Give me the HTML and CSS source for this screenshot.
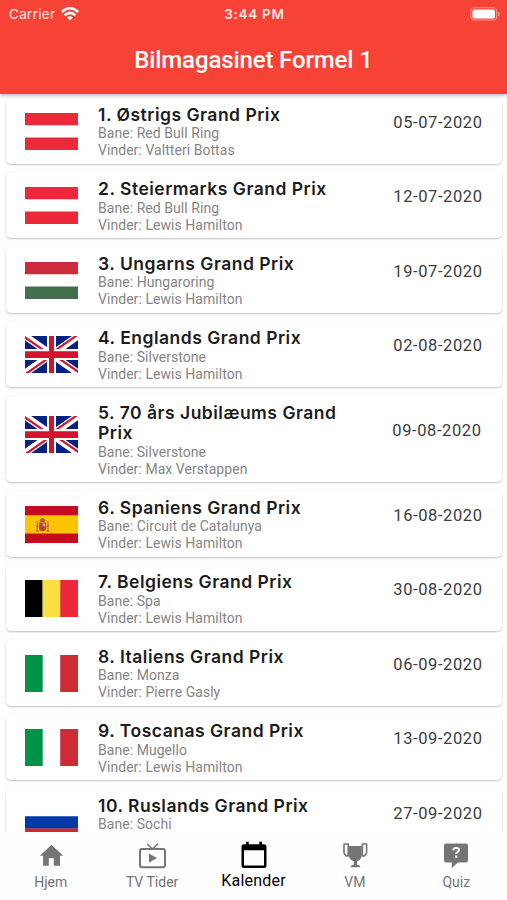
FILE: index.html
```html
<!DOCTYPE html>
<html lang="da">

<head>
    <meta charset="UTF-8">
    <meta name="viewport" content="width=device-width, initial-scale=1.0">
    <title>Bilmagasinet Formel 1</title>
    <link rel="stylesheet" href="styles.css">
</head>

<body>
    <svg class="defs" aria-hidden="true">
        <symbol id="flag-at" viewBox="0 0 53 37" preserveAspectRatio="none">
            <path fill="#fff" d="M0 0h53v37H0z" />
            <path fill="#ed2939" d="M0 0h53v12.3H0zM0 24.6h53V37H0z" />
        </symbol>
        <symbol id="flag-hu" viewBox="0 0 53 37" preserveAspectRatio="none">
            <path fill="#fff" d="M0 0h53v37H0z" />
            <path fill="#cd2a3e" d="M0 0h53v12.3H0z" />
            <path fill="#436f4d" d="M0 24.6h53V37H0z" />
        </symbol>
        <symbol id="flag-gb" viewBox="0 0 53 37" preserveAspectRatio="none">
            <path fill="#00217d" d="M0 0h53v37H0z" />
            <path stroke="#fff" stroke-width="7" d="M0 0l53 37M53 0L0 37" />
            <path stroke="#cf142b" stroke-width="2.2" d="M-1 .6l21 14.6M54 36.4L33 21.8M51.5 -.4L30 14.6M1.5 37.4L23 22.4" />
            <path fill="#fff" d="M22 0h9v37h-9zM0 13h53v11H0z" />
            <path fill="#cf142b" d="M24 0h5v37h-5zM0 15.2h53v6.8H0z" />
        </symbol>
        <symbol id="flag-es" viewBox="0 0 53 37" preserveAspectRatio="none">
            <path fill="#c60b1e" d="M0 0h53v37H0z" />
            <path fill="#ffc400" d="M0 9.2h53v18.4H0z" />
            <path fill="#ad5b27" d="M14.5 14.5l1.5-2 1.5-.6 1.5.6 1.5 2-.8 1.5h-4.4z" />
            <path fill="#b8452e" d="M14 16.5h7v5.5q0 3-3.5 3.3Q14 25 14 22z" />
            <path fill="#d99a91" d="M17.7 17.4h2.5v3h-2.5z" />
            <path fill="#ad7c64" d="M11.5 15h1.3v10h-1.3zM22.3 15h1.3v10h-1.3z" />
            <path stroke="#b04a2d" stroke-width=".9" d="M10.8 19.5l3 1.5M24.2 19.5l-3 1.5M10.8 25h3M21.5 25h3" />
        </symbol>
        <symbol id="flag-be" viewBox="0 0 53 37" preserveAspectRatio="none">
            <path d="M0 0h17.7v37H0z" />
            <path fill="#fae042" d="M17.6 0h17.7v37H17.6z" />
            <path fill="#ed2939" d="M35.2 0H53v37H35.2z" />
        </symbol>
        <symbol id="flag-it" viewBox="0 0 53 37" preserveAspectRatio="none">
            <path fill="#fff" d="M0 0h53v37H0z" />
            <path fill="#009246" d="M0 0h17.7v37H0z" />
            <path fill="#ce2b37" d="M35.2 0H53v37H35.2z" />
        </symbol>
        <symbol id="flag-ru" viewBox="0 0 53 37" preserveAspectRatio="none">
            <path fill="#fff" d="M0 0h53v37H0z" />
            <path fill="#0039a6" d="M0 12.3h53v12.4H0z" />
            <path fill="#d52b1e" d="M0 24.6h53V37H0z" />
        </symbol>
    </svg>

    <header class="header">
        <div class="status">
            <div class="carrier">
                <span>Carrier</span>
                <svg class="wifi" viewBox="0 0 18 14">
                    <path fill="none" stroke="#fff" stroke-width="2.5" d="M.8 5Q9-2.4 17.2 5M3.6 8.3Q9 3.4 14.4 8.3" />
                    <path fill="#fff" d="M6 10.4Q9 8 12 10.4L9 13.6z" />
                </svg>
            </div>
            <div class="time">3:44 PM</div>
            <svg class="battery" viewBox="0 0 30 14">
                <rect x=".8" y=".8" width="26" height="12.2" rx="3.6" fill="none" stroke="#fff" stroke-opacity=".45" stroke-width="1.1" />
                <rect x="2.5" y="2.4" width="22.5" height="9" rx="2" fill="#fff" />
                <path fill="#fff" fill-opacity=".45" d="M28.2 5q1.6 0 1.6 2t-1.6 2z" />
            </svg>
        </div>
        <h1 class="app-title">Bilmagasinet Formel 1</h1>
    </header>

    <main class="races">
        <div class="race">
            <svg class="flag"><use href="#flag-at" /></svg>
            <div class="info">
                <h2 class="name">1. Østrigs Grand Prix</h2>
                <p>Bane: Red Bull Ring</p>
                <p>Vinder: Valtteri Bottas</p>
            </div>
            <div class="date">05-07-2020</div>
        </div>
        <div class="race">
            <svg class="flag"><use href="#flag-at" /></svg>
            <div class="info">
                <h2 class="name">2. Steiermarks Grand Prix</h2>
                <p>Bane: Red Bull Ring</p>
                <p>Vinder: Lewis Hamilton</p>
            </div>
            <div class="date">12-07-2020</div>
        </div>
        <div class="race">
            <svg class="flag"><use href="#flag-hu" /></svg>
            <div class="info">
                <h2 class="name">3. Ungarns Grand Prix</h2>
                <p>Bane: Hungaroring</p>
                <p>Vinder: Lewis Hamilton</p>
            </div>
            <div class="date">19-07-2020</div>
        </div>
        <div class="race">
            <svg class="flag"><use href="#flag-gb" /></svg>
            <div class="info">
                <h2 class="name">4. Englands Grand Prix</h2>
                <p>Bane: Silverstone</p>
                <p>Vinder: Lewis Hamilton</p>
            </div>
            <div class="date">02-08-2020</div>
        </div>
        <div class="race tall">
            <svg class="flag"><use href="#flag-gb" /></svg>
            <div class="info">
                <h2 class="name">5. 70 års Jubilæums Grand Prix</h2>
                <p>Bane: Silverstone</p>
                <p>Vinder: Max Verstappen</p>
            </div>
            <div class="date">09-08-2020</div>
        </div>
        <div class="race">
            <svg class="flag"><use href="#flag-es" /></svg>
            <div class="info">
                <h2 class="name">6. Spaniens Grand Prix</h2>
                <p>Bane: Circuit de Catalunya</p>
                <p>Vinder: Lewis Hamilton</p>
            </div>
            <div class="date">16-08-2020</div>
        </div>
        <div class="race">
            <svg class="flag"><use href="#flag-be" /></svg>
            <div class="info">
                <h2 class="name">7. Belgiens Grand Prix</h2>
                <p>Bane: Spa</p>
                <p>Vinder: Lewis Hamilton</p>
            </div>
            <div class="date">30-08-2020</div>
        </div>
        <div class="race">
            <svg class="flag"><use href="#flag-it" /></svg>
            <div class="info">
                <h2 class="name">8. Italiens Grand Prix</h2>
                <p>Bane: Monza</p>
                <p>Vinder: Pierre Gasly</p>
            </div>
            <div class="date">06-09-2020</div>
        </div>
        <div class="race">
            <svg class="flag"><use href="#flag-it" /></svg>
            <div class="info">
                <h2 class="name">9. Toscanas Grand Prix</h2>
                <p>Bane: Mugello</p>
                <p>Vinder: Lewis Hamilton</p>
            </div>
            <div class="date">13-09-2020</div>
        </div>
        <div class="race">
            <svg class="flag"><use href="#flag-ru" /></svg>
            <div class="info">
                <h2 class="name">10. Ruslands Grand Prix</h2>
                <p>Bane: Sochi</p>
            </div>
            <div class="date">27-09-2020</div>
        </div>
    </main>

    <nav class="tabs">
        <a class="tab">
            <svg viewBox="0 0 28 28"><path d="M11.8 24.8v-7.5h5v7.5h6.2V14.7h3.2L14.5 3.8 3 14.7h3.1v10.1z" /></svg>
            <span>Hjem</span>
        </a>
        <a class="tab">
            <svg viewBox="0 0 28 28">
                <rect x="2" y="8" width="25" height="18.2" rx="2" fill="none" stroke="currentColor" stroke-width="2" />
                <path fill="none" stroke="currentColor" stroke-width="1.5" d="M9 2.8l5.5 5.2L20 2.8" />
                <path d="M11 12.4v9.4l8-4.7z" />
            </svg>
            <span>TV Tider</span>
        </a>
        <a class="tab active">
            <svg viewBox="0 0 28 28"><path fill-rule="evenodd" d="M4 3.2h2V.8h2.7v2.4h10.6V.8H22v2.4h2q2.5 0 2.5 2.5v18.8q0 2.5-2.5 2.5H4q-2.5 0-2.5-2.5V5.7q0-2.5 2.5-2.5zM4 9.2v15.3h20V9.2z" /></svg>
            <span>Kalender</span>
        </a>
        <a class="tab">
            <svg viewBox="0 0 28 28">
                <path d="M7.8 5h13v8.5q0 5-4.8 6.8v3.4q3.4.5 3.4 2.6h-10q0-2.1 3.4-2.6v-3.4Q7.8 18.500 7.8 13.500z" />
                <path fill="none" stroke="currentColor" stroke-width="1.6" stroke-linejoin="round" d="M3 3h4.200v12H5.200L3 12zM25.600 3h-4.200v12h2l2.200-3z" />
            </svg>
            <span>VM</span>
        </a>
        <a class="tab">
            <svg viewBox="0 0 28 28">
                <path d="M4 2.500h20q2 0 2 2v15q0 2-2 2h-8L9.800 27v-5.500H4q-2 0-2-2v-15q0-2 2-2z" />
                <path fill="none" stroke="#fff" stroke-width="2" d="M11.200 9.300q.2-2.300 3-2.300t2.800 2.100q0 1.300-1.500 2T14.200 13.200" />
                <path fill="#fff" d="M13.100 14.600h2.200v2.100h-2.200z" />
            </svg>
            <span>Quiz</span>
        </a>
    </nav>
</body>

</html>
```
FILE: styles.css
```css
* {
    box-sizing: border-box;
}

body {
    height: 100vh;
    margin: 0;
    display: flex;
    flex-direction: column;
    overflow: hidden;
    font-family: Inter, sans-serif;
    background-color: #fefefe;
    color: #1c1c1c;
}

h1,
h2,
p {
    margin: 0;
}

.defs {
    display: none;
}

.header {
    flex: none;
    height: 94px;
    background-color: #f64336;
    color: #fff;
    box-shadow: 0 1px 4px rgba(0, 0, 0, 0.35);
    z-index: 1;
}

.status {
    display: grid;
    grid-template-columns: 1fr auto 1fr;
    align-items: center;
    height: 27px;
    padding: 0 7px 0 9px;
}

.carrier {
    display: flex;
    align-items: center;
    gap: 6px;
    font-size: 13.5px;
    letter-spacing: 0.3px;
    color: #ffe4e1;
}

.wifi {
    width: 18px;
    height: 14px;
}

.time {
    font-size: 13.5px;
    font-weight: 600;
    letter-spacing: 0.7px;
    color: #ffe9e6;
}

.battery {
    justify-self: end;
    width: 30px;
    height: 14px;
}

.app-title {
    padding-top: 18px;
    font: 500 24px/30px Roboto, sans-serif;
    letter-spacing: -0.12px;
    text-align: center;
}

.races {
    flex: 1;
    min-height: 0;
    overflow: hidden;
    display: flex;
    flex-direction: column;
    gap: 8.5px;
    padding: 3.5px 5px 0 6px;
}

.race {
    flex: none;
    display: flex;
    height: 66px;
    padding: 7px 20px 0 19px;
    border-radius: 5px;
    background-color: #fff;
    box-shadow: 0 1px 2px rgba(0, 0, 0, 0.24);
}

.tall {
    height: 86.5px;
    padding-right: 21px;
}

.flag {
    flex: none;
    width: 53px;
    height: 37px;
    margin: 8px 20px 0 0;
}

.tall .flag {
    margin-top: 13.5px;
}

.info {
    width: 260px;
    font: 14px/17px Roboto, sans-serif;
    letter-spacing: 0.05px;
    color: #858585;
}

.name {
    font: 600 17.5px/20.5px Inter, sans-serif;
    letter-spacing: 0.5px;
    color: #1c1c1c;
}

.date {
    margin: 8px -0.6px 0 auto;
    font: 16.5px/20px Roboto, sans-serif;
    letter-spacing: 0.6px;
    color: #3c3c3c;
}

.tall .date {
    margin-top: 18px;
}

.tabs {
    flex: none;
    display: flex;
    height: 68px;
    background-color: #fefefe;
    z-index: 1;
}

.tab {
    flex: 1;
    display: flex;
    flex-direction: column;
    align-items: center;
    padding-top: 9px;
    font: 14px/20px Roboto, sans-serif;
    color: #757575;
}

.tab svg {
    width: 28px;
    height: 28px;
    fill: currentColor;
}

.tab span {
    margin-top: 3px;
}

.active {
    color: #000;
}

.active span {
    margin-top: 2px;
    font-size: 16px;
    letter-spacing: 0.2px;
}
```
